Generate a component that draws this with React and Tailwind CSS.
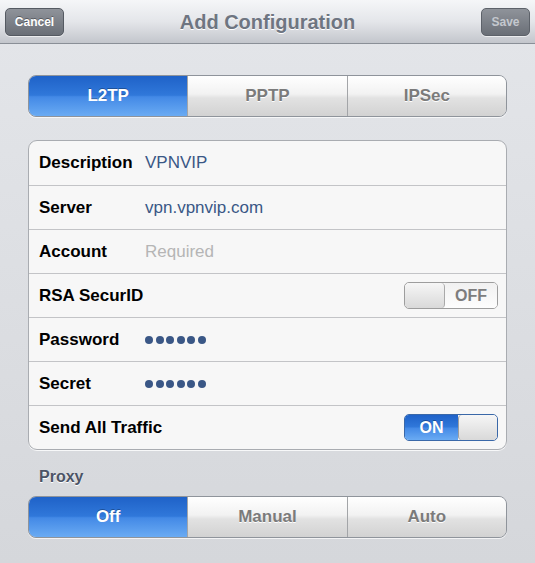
import React from "react";

const font = { fontFamily: '"Liberation Sans", Arial, sans-serif' };

function Segmented({ items, selected }) {
  return (
    <div className="flex h-[42px] rounded-[8px] border border-[#8f949b] overflow-hidden shadow-[0_1px_0_rgba(255,255,255,0.7)]">
      {items.map((it, i) => {
        const sel = i === selected;
        return (
          <div
            key={it}
            className={
              "flex flex-1 items-center justify-center text-[17px] font-bold " +
              (i > 0 ? "border-l border-[#a3a5a8] " : "") +
              (sel
                ? "text-white bg-[linear-gradient(to_bottom,#1f62c8_0%,#3078da_48%,#4389e6_52%,#6aabf3_100%)] [text-shadow:0_-1px_0_rgba(0,0,0,0.3)]"
                : "text-[#7b7b7b] bg-[linear-gradient(to_bottom,#ffffff_0%,#f2f2f2_45%,#e2e2e2_55%,#d2d2d2_100%)] [text-shadow:0_1px_0_#ffffff]")
            }
          >
            {it}
          </div>
        );
      })}
    </div>
  );
}

function Row({ label, children, right, first }) {
  return (
    <div
      className={
        "flex h-[44px] items-center pl-[10px] pr-[8px] " +
        (first ? "" : "border-t border-[#c3c4c7]")
      }
    >
      <div className="w-[106px] whitespace-nowrap text-[17px] font-bold text-black">{label}</div>
      <div className="flex-1 text-[17px]">{children}</div>
      {right}
    </div>
  );
}

function Dots() {
  return (
    <div className="flex gap-[2.5px] pt-[1px]">
      {[0, 1, 2, 3, 4, 5].map((i) => (
        <span key={i} className="block h-[8px] w-[8px] rounded-full bg-[#3a5786]" />
      ))}
    </div>
  );
}

function ToggleOff() {
  return (
    <div className="flex h-[27px] w-[94px] overflow-hidden rounded-[5px] border border-[#9d9d9d] bg-[#fafafa]">
      <div className="w-[40px] rounded-[4px] border-r border-[#a9a9a9] bg-[linear-gradient(to_bottom,#f6f6f6,#d9d9d9)]" />
      <div className="flex flex-1 items-center justify-center bg-[linear-gradient(to_bottom,#f1f1f1,#fdfdfd)] text-[16px] font-bold text-[#7d7d7d]">
        OFF
      </div>
    </div>
  );
}

function ToggleOn() {
  return (
    <div className="flex h-[27px] w-[94px] overflow-hidden rounded-[5px] border border-[#3a68a8] bg-[#fafafa]">
      <div className="flex w-[53px] items-center justify-center bg-[linear-gradient(to_bottom,#1f62c8_0%,#3078da_48%,#4389e6_52%,#6aabf3_100%)] text-[16px] font-bold text-white [text-shadow:0_-1px_0_rgba(0,0,0,0.3)]">
        ON
      </div>
      <div className="flex-1 rounded-[4px] border-l border-[#9d9d9d] bg-[linear-gradient(to_bottom,#f6f6f6,#d9d9d9)]" />
    </div>
  );
}

export default function App() {
  return (
    <div
      style={font}
      className="h-[563px] w-[535px] overflow-hidden bg-[linear-gradient(to_bottom,#e4e6ea,#d5d7db)]"
    >
      <div className="relative flex h-[44px] items-center justify-between border-b border-[#8a8f97] bg-[linear-gradient(to_bottom,#f5f6f8_0%,#e4e6ea_50%,#c3c6cc_100%)] px-[5px]">
        <div className="flex h-[28px] w-[59px] items-center justify-center rounded-[5px] border border-[#555a62] bg-[linear-gradient(to_bottom,#8f939a,#6a6f77)] text-[12px] font-bold text-white shadow-[0_1px_0_rgba(255,255,255,0.6)] [text-shadow:0_-1px_0_rgba(0,0,0,0.35)]">
          Cancel
        </div>
        <div className="absolute left-0 right-0 top-0 flex h-[43px] items-center justify-center text-[20px] font-bold text-[#6e7581] [text-shadow:0_1px_0_#ffffff] pointer-events-none">
          Add Configuration
        </div>
        <div className="flex h-[28px] w-[49px] items-center justify-center rounded-[5px] border border-[#5d626a] bg-[linear-gradient(to_bottom,#8f939a,#6a6f77)] text-[12px] font-bold text-[#c4c8ce] shadow-[0_1px_0_rgba(255,255,255,0.6)]">
          Save
        </div>
      </div>

      <div className="px-[28px] pt-[31px]">
        <Segmented items={["L2TP", "PPTP", "IPSec"]} selected={0} />

        <div className="mt-[23px] overflow-hidden rounded-[9px] border border-[#a9acb1] bg-[#f7f7f7] shadow-[0_1px_0_rgba(255,255,255,0.8)]">
          <Row label="Description" first>
            <span className="text-[#3a5786]">VPNVIP</span>
          </Row>
          <Row label="Server">
            <span className="text-[#3a5786]">vpn.vpnvip.com</span>
          </Row>
          <Row label="Account">
            <span className="text-[#b5b5b5]">Required</span>
          </Row>
          <Row label="RSA SecurID" right={<ToggleOff />} />
          <Row label="Password">
            <Dots />
          </Row>
          <Row label="Secret">
            <Dots />
          </Row>
          <Row label="Send All Traffic" right={<ToggleOn />} />
        </div>

        <div className="mt-[17px] mb-[9px] pl-[11px] text-[16px] font-bold leading-[20px] text-[#4c5466] [text-shadow:0_1px_0_#ffffff]">
          Proxy
        </div>
        <Segmented items={["Off", "Manual", "Auto"]} selected={0} />
      </div>
    </div>
  );
}
